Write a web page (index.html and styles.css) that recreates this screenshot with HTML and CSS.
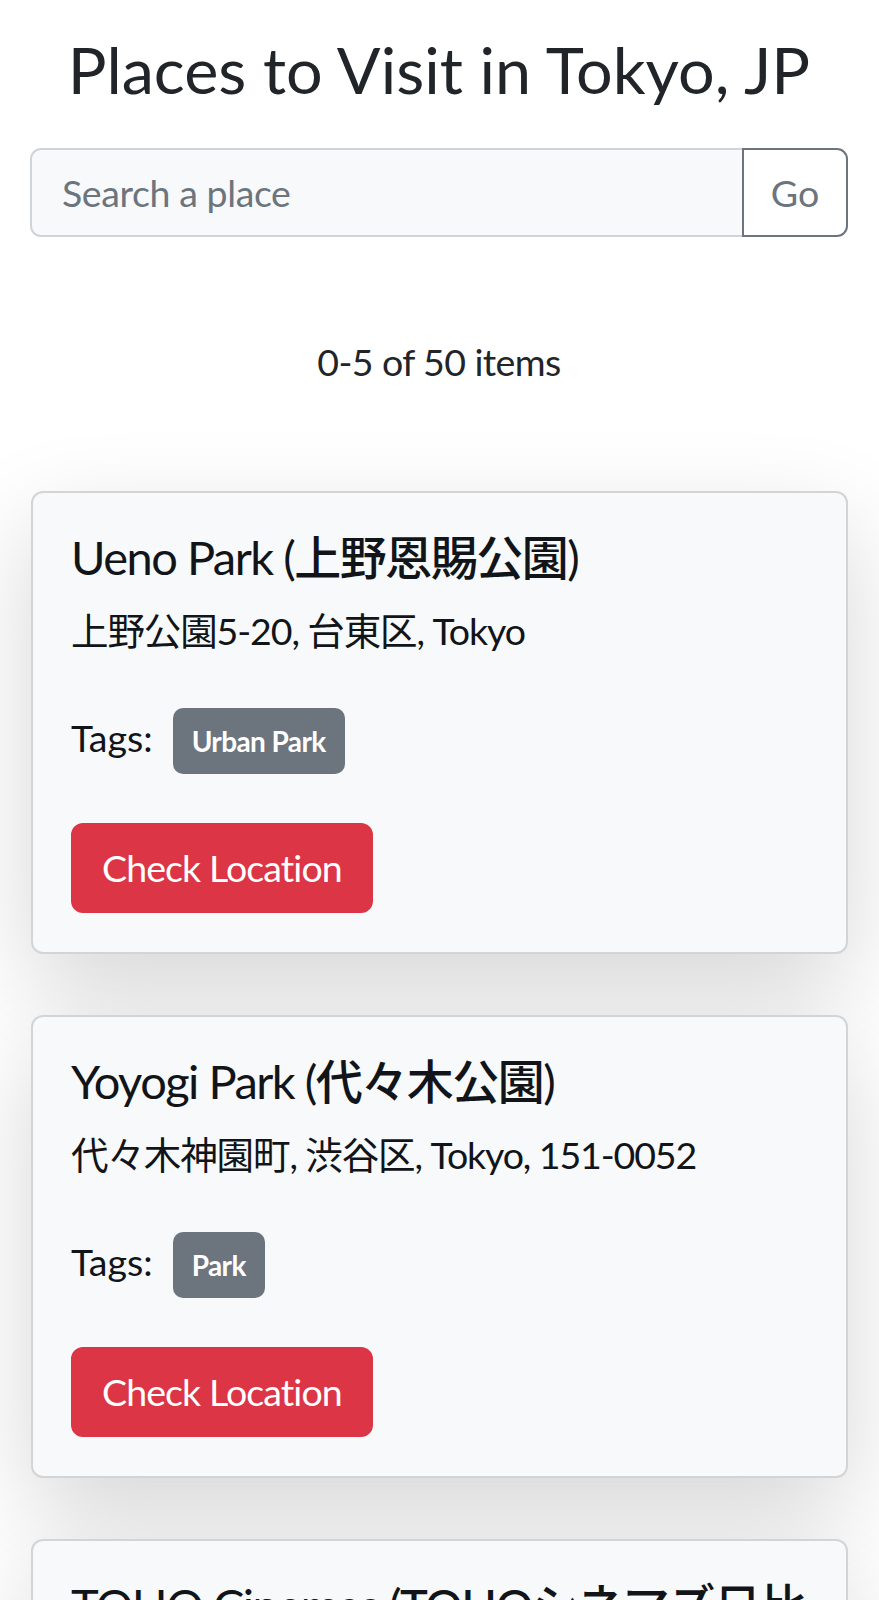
FILE: index.html
```html
<!DOCTYPE html>
<html lang="en">
<head>
<meta charset="utf-8">
<title>Places to Visit in Tokyo, JP</title>
<link rel="stylesheet" href="styles.css">
</head>
<body>
<main class="container">
  <h1 class="page-title">Places to Visit in Tokyo, JP</h1>
  <form class="search" onsubmit="return false">
    <input class="search-input" type="text" placeholder="Search a place">
    <button class="search-btn" type="submit">Go</button>
  </form>
  <p class="count">0-5 of 50 items</p>

  <section class="list">
    <article class="card">
      <h5 class="card-title">Ueno Park (<span class="ja">上野恩賜公園</span>)</h5>
      <p class="card-text">上野公園5-20, 台東区, Tokyo</p>
      <div class="tags"><span class="tags-label">Tags:</span><span class="badge">Urban Park</span></div>
      <button class="btn-danger" type="button">Check Location</button>
    </article>

    <article class="card">
      <h5 class="card-title">Yoyogi Park (<span class="ja">代々木公園</span>)</h5>
      <p class="card-text">代々木神園町, 渋谷区, Tokyo, 151-0052</p>
      <div class="tags"><span class="tags-label">Tags:</span><span class="badge">Park</span></div>
      <button class="btn-danger" type="button">Check Location</button>
    </article>

    <article class="card">
      <h5 class="card-title">TOHO Cinemas (<span class="ja">TOHOシネマズ日比谷</span>)</h5>
      <p class="card-text">有楽町1-1-2, 千代田区, Tokyo, 100-0006</p>
      <div class="tags"><span class="tags-label">Tags:</span><span class="badge">Movie Theater</span></div>
      <button class="btn-danger" type="button">Check Location</button>
    </article>
  </section>
</main>
</body>
</html>
```
FILE: styles.css
```css
* { box-sizing: border-box; }

html, body {
  margin: 0;
  padding: 0;
  background: #ffffff;
}

body {
  font-family: Lato, "Noto Sans CJK JP", sans-serif;
  font-size: 37.5px;
  line-height: 56px;
  color: #212529;
}

.container {
  padding: 30px 31px 0 30px;
}

.page-title {
  margin: 0 0 40px;
  font-size: 64.7px;
  line-height: 78px;
  font-weight: 400;
  text-align: center;
}

.search {
  display: flex;
  height: 89px;
  margin: 0;
}

.search-input {
  flex: 1;
  min-width: 0;
  height: 100%;
  border: 2px solid #ced4da;
  border-right: none;
  border-radius: 11px 0 0 11px;
  background: #f8f9fa;
  padding: 0 30px;
  font-family: inherit;
  font-size: 37.5px;
  letter-spacing: -0.4px;
  color: #212529;
  outline: none;
}

.search-input::placeholder {
  color: #6c757d;
}

.search-btn {
  width: 106px;
  height: 100%;
  border: 2px solid #6c757d;
  border-radius: 0 11px 11px 0;
  background: #ffffff;
  color: #6c757d;
  font-family: inherit;
  font-size: 37.5px;
  padding: 0;
}

.count {
  margin: 97px 0 101px;
  text-align: center;
  letter-spacing: -0.6px;
}

.list {
  display: flex;
  flex-direction: column;
  gap: 61px;
}

.card {
  margin-left: 1px;
  background: #f8f9fa;
  border: 2px solid #d3d4d6;
  border-radius: 12px;
  padding: 36px 38px 39px;
  box-shadow: 0 36px 100px rgba(0, 0, 0, 0.16);
}

.card-title {
  margin: 0 0 18px;
  font-size: 47px;
  line-height: 56px;
  font-weight: 400;
  letter-spacing: -1.5px;
  color: #111418;
}

.card-title .ja {
  font-weight: 500;
}

.card-text {
  margin: 0 0 49px;
  color: #111418;
  letter-spacing: -1.1px;
}

.tags {
  display: flex;
  align-items: baseline;
  gap: 20px;
  color: #111418;
}

.badge {
  display: inline-block;
  background: #6c757d;
  color: #ffffff;
  font-size: 28px;
  font-weight: 700;
  line-height: 28px;
  letter-spacing: -0.6px;
  padding: 19px 19px;
  border-radius: 10px;
}

.btn-danger {
  display: inline-block;
  margin-top: 49px;
  background: #dc3545;
  border: 2px solid #dc3545;
  border-radius: 12px;
  color: #ffffff;
  font-family: inherit;
  font-size: 37.5px;
  line-height: 58px;
  letter-spacing: -0.9px;
  padding: 14px 29px;
}
```
